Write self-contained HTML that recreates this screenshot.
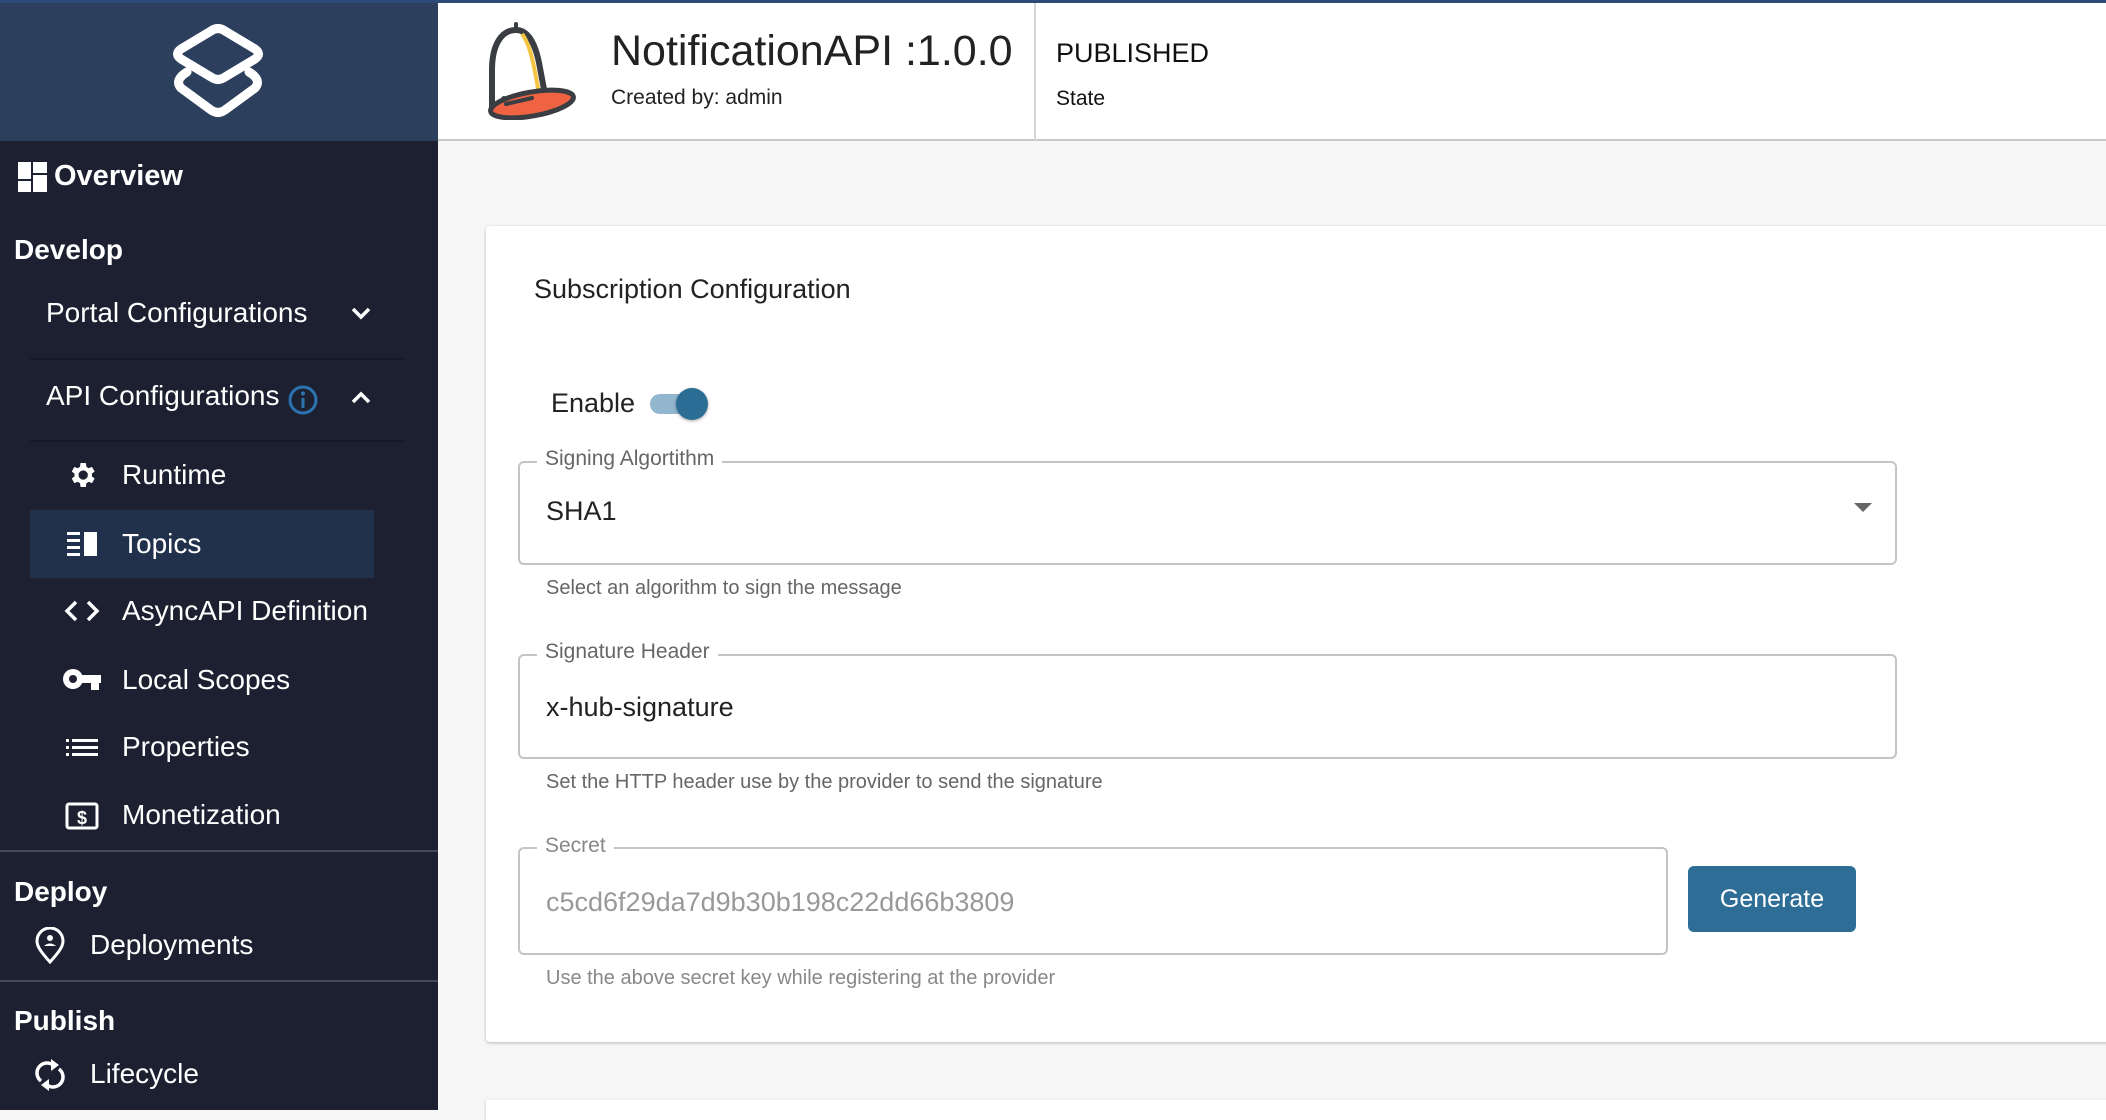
<!DOCTYPE html>
<html><head><meta charset="utf-8"><style>
*{margin:0;padding:0;box-sizing:border-box}
body{width:2106px;height:1110px;overflow:hidden;background:#f6f6f6;font-family:"Liberation Sans",sans-serif;position:relative}
.a{position:absolute;white-space:nowrap}
.sb{position:absolute;left:0;top:0;width:438px;height:1110px;background:#1c2030}
.logo{position:absolute;left:0;top:0;width:438px;height:141px;background:#2c3f5d}
.nav{font-size:28px;color:#fff;line-height:1}
.hd{font-size:28px;font-weight:bold;color:#fff;line-height:1}
.lbl{font-size:21px;color:#666;background:#fff;padding:0 8px;line-height:1}
.fld{position:absolute;border:2px solid #c4c4c4;border-radius:6px}
.help{font-size:20px;color:#666;line-height:1}
</style></head><body>
<div class="a" style="left:0;top:0;width:2106px;height:3px;background:#2c4a7a;z-index:5"></div>
<div class="sb"></div>
<div class="logo">
<svg class="a" style="left:0;top:0" width="438" height="141" viewBox="0 0 438 141"><g fill="none" stroke="#fff" stroke-width="9" stroke-linejoin="round" stroke-linecap="round"><path d="M211 31 Q218 26 225 31 L255 49 Q262 54 255 59 L225 77 Q218 82 211 77 L181 59 Q174 54 181 49 Z"/><path d="M187 72 Q174 80 181 88 L211 110 Q218 115 225 110 L255 88 Q262 80 249 72"/></g></svg>
</div>
<!-- sidebar -->
<svg class="a" style="left:18px;top:162px" width="32" height="30" viewBox="0 0 32 30" fill="#fff"><rect x="0" y="0" width="13" height="17"/><rect x="0" y="19" width="13" height="11"/><rect x="15" y="0" width="14" height="11"/><rect x="15" y="13" width="14" height="17"/></svg>
<div class="a hd" style="left:54px;top:162px;font-size:29px">Overview</div>
<div class="a hd" style="left:14px;top:236px">Develop</div>
<div class="a nav" style="left:46px;top:299px">Portal Configurations</div>
<svg class="a" style="left:350px;top:305px" width="22" height="16" viewBox="0 0 22 16"><path d="M3 4 L11 12 L19 4" fill="none" stroke="#fff" stroke-width="3.5"/></svg>
<div class="a" style="left:30px;top:358px;width:376px;height:2px;background:#171a26"></div>
<div class="a nav" style="left:46px;top:382px">API Configurations</div>
<svg class="a" style="left:287px;top:384px" width="32" height="32" viewBox="0 0 32 32"><circle cx="16" cy="16" r="13" fill="none" stroke="#2b74b0" stroke-width="3"/><rect x="14.5" y="14" width="3" height="10" fill="#2b74b0"/><circle cx="16" cy="9.5" r="2" fill="#2b74b0"/></svg>
<svg class="a" style="left:350px;top:390px" width="22" height="16" viewBox="0 0 22 16"><path d="M3 12 L11 4 L19 12" fill="none" stroke="#fff" stroke-width="3.5"/></svg>
<div class="a" style="left:30px;top:440px;width:376px;height:2px;background:#171a26"></div>
<div class="a" style="left:30px;top:510px;width:344px;height:68px;background:#22314b"></div>
<svg class="a" style="left:66px;top:459px" width="32" height="32" viewBox="0 0 24 24" fill="#fff"><path d="M19.4 13a7.5 7.5 0 0 0 0-2l2.1-1.6-2-3.5-2.5 1a7 7 0 0 0-1.7-1L14.9 3h-4l-.4 2.9a7 7 0 0 0-1.7 1l-2.5-1-2 3.5L6.4 11a7.5 7.5 0 0 0 0 2l-2.1 1.6 2 3.5 2.5-1a7 7 0 0 0 1.7 1l.4 2.9h4l.4-2.9a7 7 0 0 0 1.7-1l2.5 1 2-3.5zM12.9 15.5a3.5 3.5 0 1 1 0-7 3.5 3.5 0 0 1 0 7z"/></svg>
<div class="a nav" style="left:122px;top:461px">Runtime</div>
<svg class="a" style="left:67px;top:532px" width="31" height="24" viewBox="0 0 31 24" fill="#fff"><rect x="0" y="0" width="13" height="3"/><rect x="0" y="7" width="13" height="3"/><rect x="0" y="14" width="13" height="3"/><rect x="0" y="21" width="13" height="3"/><rect x="17" y="0" width="13" height="24"/></svg>
<div class="a nav" style="left:122px;top:530px">Topics</div>
<svg class="a" style="left:64px;top:598px" width="36" height="26" viewBox="0 0 36 26"><path d="M12 4 L3 13 L12 22 M24 4 L33 13 L24 22" fill="none" stroke="#fff" stroke-width="3.5"/></svg>
<div class="a nav" style="left:122px;top:597px">AsyncAPI Definition</div>
<svg class="a" style="left:63px;top:668px" width="38" height="24" viewBox="0 0 38 24" fill="#fff"><circle cx="10" cy="11" r="10"/><circle cx="10" cy="11" r="4" fill="#1c2030"/><rect x="18" y="7" width="20" height="8"/><rect x="28" y="12" width="8" height="10"/></svg>
<div class="a nav" style="left:122px;top:666px">Local Scopes</div>
<svg class="a" style="left:66px;top:739px" width="32" height="18" viewBox="0 0 32 18" fill="#fff"><rect x="0" y="0" width="3" height="3"/><rect x="6" y="0" width="26" height="3"/><rect x="0" y="7" width="3" height="3"/><rect x="6" y="7" width="26" height="3"/><rect x="0" y="14" width="3" height="3"/><rect x="6" y="14" width="26" height="3"/></svg>
<div class="a nav" style="left:122px;top:733px">Properties</div>
<svg class="a" style="left:65px;top:802px" width="34" height="28" viewBox="0 0 34 28"><rect x="2" y="2" width="30" height="24" rx="2" fill="none" stroke="#fff" stroke-width="3"/><text x="17" y="22" font-size="18" font-weight="bold" fill="#fff" text-anchor="middle" font-family="Liberation Sans">$</text></svg>
<div class="a nav" style="left:122px;top:801px">Monetization</div>
<div class="a" style="left:0;top:850px;width:438px;height:2px;background:#444858"></div>
<div class="a hd" style="left:14px;top:878px">Deploy</div>
<svg class="a" style="left:34px;top:927px" width="32" height="38" viewBox="0 0 32 38"><path d="M16 35 C6 24 3 19 3 14 A13 13 0 0 1 29 14 C29 19 26 24 16 35Z" fill="none" stroke="#fff" stroke-width="3"/><circle cx="16" cy="11" r="3" fill="#fff"/><path d="M10 19 Q16 14 22 19Z" fill="#fff"/></svg>
<div class="a nav" style="left:90px;top:931px">Deployments</div>
<div class="a" style="left:0;top:980px;width:438px;height:2px;background:#444858"></div>
<div class="a hd" style="left:14px;top:1007px">Publish</div>
<svg class="a" style="left:35px;top:1057px" width="30" height="36" viewBox="0 0 30 36"><path d="M6 24 A10 10 0 0 1 18 8" fill="none" stroke="#fff" stroke-width="3.5"/><path d="M16 2 L24 8 L16 14Z" fill="#fff"/><path d="M24 12 A10 10 0 0 1 12 28" fill="none" stroke="#fff" stroke-width="3.5"/><path d="M14 22 L6 28 L14 34Z" fill="#fff"/></svg>
<div class="a nav" style="left:90px;top:1060px">Lifecycle</div>
<!-- header -->
<div class="a" style="left:438px;top:3px;width:1668px;height:138px;background:#fff;border-bottom:2px solid #c8c8c8"></div>
<svg class="a" style="left:480px;top:20px" width="100" height="100" viewBox="0 0 100 100">
<path d="M36 4 L36 10" stroke="#3a3d42" stroke-width="4" stroke-linecap="round"/>
<path d="M12 88 L12 50 C12 24 22 10 36 10 C48 10 56 24 60 48 L66 80" fill="none" stroke="#3a3d42" stroke-width="6" stroke-linecap="round"/>
<path d="M42 14 C50 24 54 44 60 80" fill="none" stroke="#f5c543" stroke-width="4"/>
<ellipse cx="52" cy="84" rx="42" ry="12" transform="rotate(-10 52 84)" fill="#ef6342" stroke="#3a3d42" stroke-width="5"/>
<path d="M26 84 L52 78" stroke="#3a3d42" stroke-width="4" stroke-linecap="round"/>
<circle cx="24" cy="79" r="3" fill="#3a3d42"/></svg>
<div class="a" style="left:611px;top:30px;font-size:43px;color:#222;line-height:1">NotificationAPI :1.0.0</div>
<div class="a" style="left:611px;top:87px;font-size:21px;color:#222;line-height:1">Created by: admin</div>
<div class="a" style="left:1034px;top:3px;width:2px;height:138px;background:#d4d4d4"></div>
<div class="a" style="left:1056px;top:40px;font-size:27px;color:#111;line-height:1">PUBLISHED</div>
<div class="a" style="left:1056px;top:88px;font-size:21px;color:#111;line-height:1">State</div>
<!-- card -->
<div class="a" style="left:486px;top:226px;width:1640px;height:816px;background:#fff;border-radius:4px;box-shadow:0 1px 3px rgba(0,0,0,.25)"></div>
<div class="a" style="left:486px;top:1100px;width:1640px;height:20px;background:#fff;box-shadow:0 1px 3px rgba(0,0,0,.2)"></div>
<div class="a" style="left:534px;top:276px;font-size:27px;color:#222;line-height:1">Subscription Configuration</div>
<div class="a" style="left:551px;top:390px;font-size:27px;color:#222;line-height:1">Enable</div>
<div class="a" style="left:650px;top:394px;width:50px;height:20px;border-radius:10px;background:#93b6cf"></div>
<div class="a" style="left:676px;top:388px;width:32px;height:32px;border-radius:50%;background:#2c6d96;box-shadow:0 1px 3px rgba(0,0,0,.35)"></div>
<div class="fld" style="left:518px;top:461px;width:1379px;height:104px"></div>
<div class="a lbl" style="left:537px;top:448px">Signing Algortithm</div>
<div class="a" style="left:546px;top:498px;font-size:27px;color:#222;line-height:1">SHA1</div>
<svg class="a" style="left:1854px;top:503px" width="18" height="10" viewBox="0 0 18 10"><path d="M0 0 L18 0 L9 9Z" fill="#666"/></svg>
<div class="a help" style="left:546px;top:578px">Select an algorithm to sign the message</div>
<div class="fld" style="left:518px;top:654px;width:1379px;height:105px"></div>
<div class="a lbl" style="left:537px;top:641px">Signature Header</div>
<div class="a" style="left:546px;top:694px;font-size:27px;color:#222;line-height:1">x-hub-signature</div>
<div class="a help" style="left:546px;top:772px">Set the HTTP header use by the provider to send the signature</div>
<div class="fld" style="left:518px;top:847px;width:1150px;height:108px"></div>
<div class="a lbl" style="left:537px;top:835px;color:#888">Secret</div>
<div class="a" style="left:546px;top:889px;font-size:27px;color:#999;line-height:1">c5cd6f29da7d9b30b198c22dd66b3809</div>
<div class="a" style="left:1688px;top:866px;width:168px;height:66px;border-radius:6px;background:#2d6d96;color:#fff;font-size:25px;line-height:66px;text-align:center">Generate</div>
<div class="a help" style="left:546px;top:968px;color:#888">Use the above secret key while registering at the provider</div>
</body></html>
